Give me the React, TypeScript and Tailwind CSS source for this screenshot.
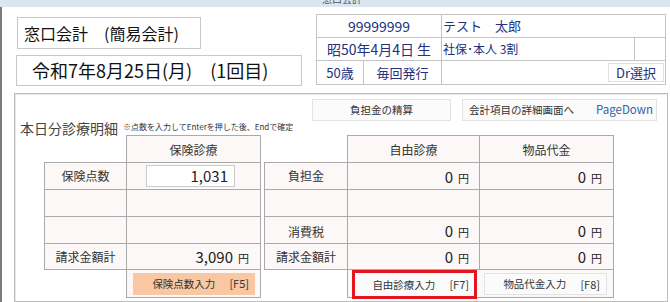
import React from "react";

const B = "border-[#aaaaaa]";

function Yen({ v, size = "text-[15px]" }: { v: string; size?: string }) {
  return (
    <span className="whitespace-nowrap">
      <span className={`${size} text-[#222]`}>{v}</span>
      <span className="ml-[5px] text-[11px] text-[#222]">円</span>
    </span>
  );
}

export default function App() {
  return (
    <div className="w-[670px] h-[302px] overflow-hidden bg-white flex flex-col font-['Noto_Sans_CJK_JP','Noto_Sans',sans-serif] text-[#222]">
      {/* window title strip */}
      <div className="h-[7px] shrink-0 bg-[#d9e5f1] overflow-hidden pl-[322px]">
        <div className="-mt-[6px] text-[10px] leading-[10px] text-[#555]">窓口会計</div>
      </div>

      <div className="flex flex-1 min-h-0">
        <div className="w-[2px] bg-[#7b7b7b] shrink-0" />
        <div className="flex-1 flex flex-col">
          {/* header */}
          <div className="flex items-start mt-[7px]">
            <div className="flex flex-col mt-[3px] ml-[15px]">
              <div className="w-[184px] h-[32px] border border-[#c8c8c8] flex items-center pl-[6px] text-[16px] text-[#111] whitespace-nowrap">
                窓口会計　(簡易会計)
              </div>
              <div className="mt-[6px] -ml-px w-[286px] h-[31px] border border-[#c8c8c8] flex items-center pl-[15px] text-[18px] text-[#111] whitespace-nowrap">
                令和7年8月25日(月)　(1回目)
              </div>
            </div>

            {/* patient table */}
            <div className="ml-[14px] w-[350px] border border-[#c4c4c4] text-[#22307e] flex flex-col">
              <div className="flex h-[22px]">
                <div className="w-[124px] flex items-center justify-center text-[14px]">99999999</div>
                <div className="flex-1 border-l border-[#c4c4c4] flex items-center pl-[1px] text-[13px] whitespace-nowrap">テスト　太郎</div>
              </div>
              <div className="flex h-[23px] border-t border-[#c4c4c4]">
                <div className="w-[124px] flex items-center justify-center text-[14px] whitespace-nowrap">昭50年4月4日 生</div>
                <div className="w-[193px] border-l border-[#c4c4c4] flex items-center pl-[1px] text-[12px] whitespace-nowrap">社保･本人 3割</div>
                <div className="flex-1 border-l border-[#c4c4c4]" />
              </div>
              <div className="flex h-[24px] border-t border-[#c4c4c4]">
                <div className="w-[46px] flex items-center justify-center text-[13px]">50歳</div>
                <div className="w-[78px] border-l border-[#c4c4c4] flex items-center justify-center text-[13px]">毎回発行</div>
                <div className="flex-1 border-l border-[#c4c4c4] flex items-center justify-end pr-[1px]">
                  <div className="w-[56px] h-[19px] border border-[#e0e0e0] bg-white flex items-center justify-center text-[13px]">Dr選択</div>
                </div>
              </div>
            </div>
          </div>

          {/* main panel */}
          <div className="mt-[7px] ml-[12px] w-[654px] h-[209px] border border-[#bcbcbc] shadow-[inset_1px_1px_0_#e8e8e8] flex flex-col">
            <div className="flex mt-[5px] pl-[297px]">
              <div className="w-[139px] h-[22px] border border-[#e3e3e3] bg-[#fbfbfb] flex items-center justify-center text-[10.5px] text-[#333]">
                負担金の精算
              </div>
              <div className="ml-[11px] w-[195px] h-[22px] border border-[#e3e3e3] bg-[#fbfbfb] flex items-center justify-between pl-[6px] pr-[3px]">
                <span className="text-[10.5px] text-[#333]">会計項目の詳細画面へ</span>
                <span className="text-[11.5px] text-[#2f64a8]">PageDown</span>
              </div>
            </div>

            <div className="flex h-[14px] pl-[5px] items-start">
              <span className="text-[14px] leading-[14px] text-[#444] whitespace-nowrap">本日分診療明細</span>
              <span className="ml-[5px] mt-[2px] text-[8px] leading-[8px] text-[#333] whitespace-nowrap">※点数を入力してEnterを押した後、Endで確定</span>
            </div>

            <div className="flex items-start pl-[29px]">
              {/* left labels */}
              <div className="w-[82px] mt-[27px] flex flex-col text-[12px] text-[#333]">
                <div className={`h-[27px] border-l border-t ${B} bg-[#fcf8f7] flex items-center justify-center`}>保険点数</div>
                <div className={`h-[27px] border-l border-t ${B} bg-[#fcf8f7]`} />
                <div className={`h-[27px] border-l border-t ${B} bg-[#fcf8f7]`} />
                <div className={`h-[27px] border-l border-t border-b ${B} bg-[#fcf8f7] flex items-center justify-center`}>請求金額計</div>
              </div>
              {/* left data */}
              <div className={`w-[135px] border ${B} flex flex-col bg-[#fcf8f7]`}>
                <div className={`h-[27px] border-b ${B} flex items-center justify-center pt-[2px] text-[12px] text-[#333]`}>保険診療</div>
                <div className={`h-[27px] border-b ${B} flex items-center`}>
                  <div className="ml-[19px] w-[89px] h-[22px] border border-[#cccccc] bg-white flex items-center justify-end pr-[6px] text-[15px] text-[#222]">1,031</div>
                </div>
                <div className={`h-[27px] border-b ${B}`} />
                <div className={`h-[27px] border-b ${B}`} />
                <div className={`h-[26px] border-b ${B} flex items-center justify-end pr-[11px]`}>
                  <Yen v="3,090" />
                </div>
                <div className="h-[27px] flex items-center">
                  <div className="ml-[6px] w-[122px] h-[22px] bg-[#f9c8a2] flex items-center justify-end pr-[6px] text-[10.5px] text-[#333] whitespace-nowrap">
                    保険点数入力<span className="ml-[14px] text-[11px]">[F5]</span>
                  </div>
                </div>
              </div>

              {/* right labels */}
              <div className="ml-[3px] w-[83px] mt-[27px] flex flex-col text-[12px] text-[#333]">
                <div className={`h-[27px] border-l border-t ${B} bg-[#fcf8f7] flex items-center justify-center`}>負担金</div>
                <div className={`h-[27px] border-l border-t ${B} bg-[#fcf8f7]`} />
                <div className={`h-[27px] border-l border-t ${B} bg-[#fcf8f7] flex items-center justify-center pt-[3px]`}>消費税</div>
                <div className={`h-[27px] border-l border-t border-b ${B} bg-[#fcf8f7] flex items-center justify-center`}>請求金額計</div>
              </div>
              {/* right data */}
              <div className={`w-[267px] border ${B} flex flex-col bg-[#fcf8f7]`}>
                <div className={`h-[27px] border-b ${B} flex text-[12px] text-[#333]`}>
                  <div className="w-[131px] flex items-center justify-center pt-[2px]">自由診療</div>
                  <div className={`flex-1 border-l ${B} flex items-center justify-center pt-[2px]`}>物品代金</div>
                </div>
                <div className={`h-[27px] border-b ${B} flex`}>
                  <div className="w-[131px] flex items-center justify-end pr-[10px]"><Yen v="0" /></div>
                  <div className={`flex-1 border-l ${B} flex items-center justify-end pr-[11px]`}><Yen v="0" /></div>
                </div>
                <div className={`h-[27px] border-b ${B} flex`}>
                  <div className="w-[131px]" />
                  <div className={`flex-1 border-l ${B}`} />
                </div>
                <div className={`h-[27px] border-b ${B} flex`}>
                  <div className="w-[131px] flex items-center justify-end pr-[10px]"><Yen v="0" /></div>
                  <div className={`flex-1 border-l ${B} flex items-center justify-end pr-[11px]`}><Yen v="0" /></div>
                </div>
                <div className={`h-[26px] border-b ${B} flex`}>
                  <div className="w-[131px] flex items-center justify-end pr-[10px]"><Yen v="0" /></div>
                  <div className={`flex-1 border-l ${B} flex items-center justify-end pr-[11px]`}><Yen v="0" /></div>
                </div>
                <div className="h-[27px] flex items-start">
                  <div className="ml-[4px] w-[125px] h-[29px] shrink-0 border-[3px] border-[#e5141f] bg-[#fbfbfb] flex items-center justify-end pr-[5px] text-[10.5px] text-[#333] whitespace-nowrap">
                    自由診療入力<span className="ml-[14px] text-[11px]">[F7]</span>
                  </div>
                  <div className="ml-[7px] mt-[3px] w-[123px] h-[22px] shrink-0 border border-[#e3e3e3] bg-[#fbfbfb] flex items-center justify-end pr-[6px] text-[10.5px] text-[#333] whitespace-nowrap">
                    物品代金入力<span className="ml-[14px] text-[11px]">[F8]</span>
                  </div>
                </div>
              </div>
            </div>
          </div>
        </div>
      </div>
    </div>
  );
}
